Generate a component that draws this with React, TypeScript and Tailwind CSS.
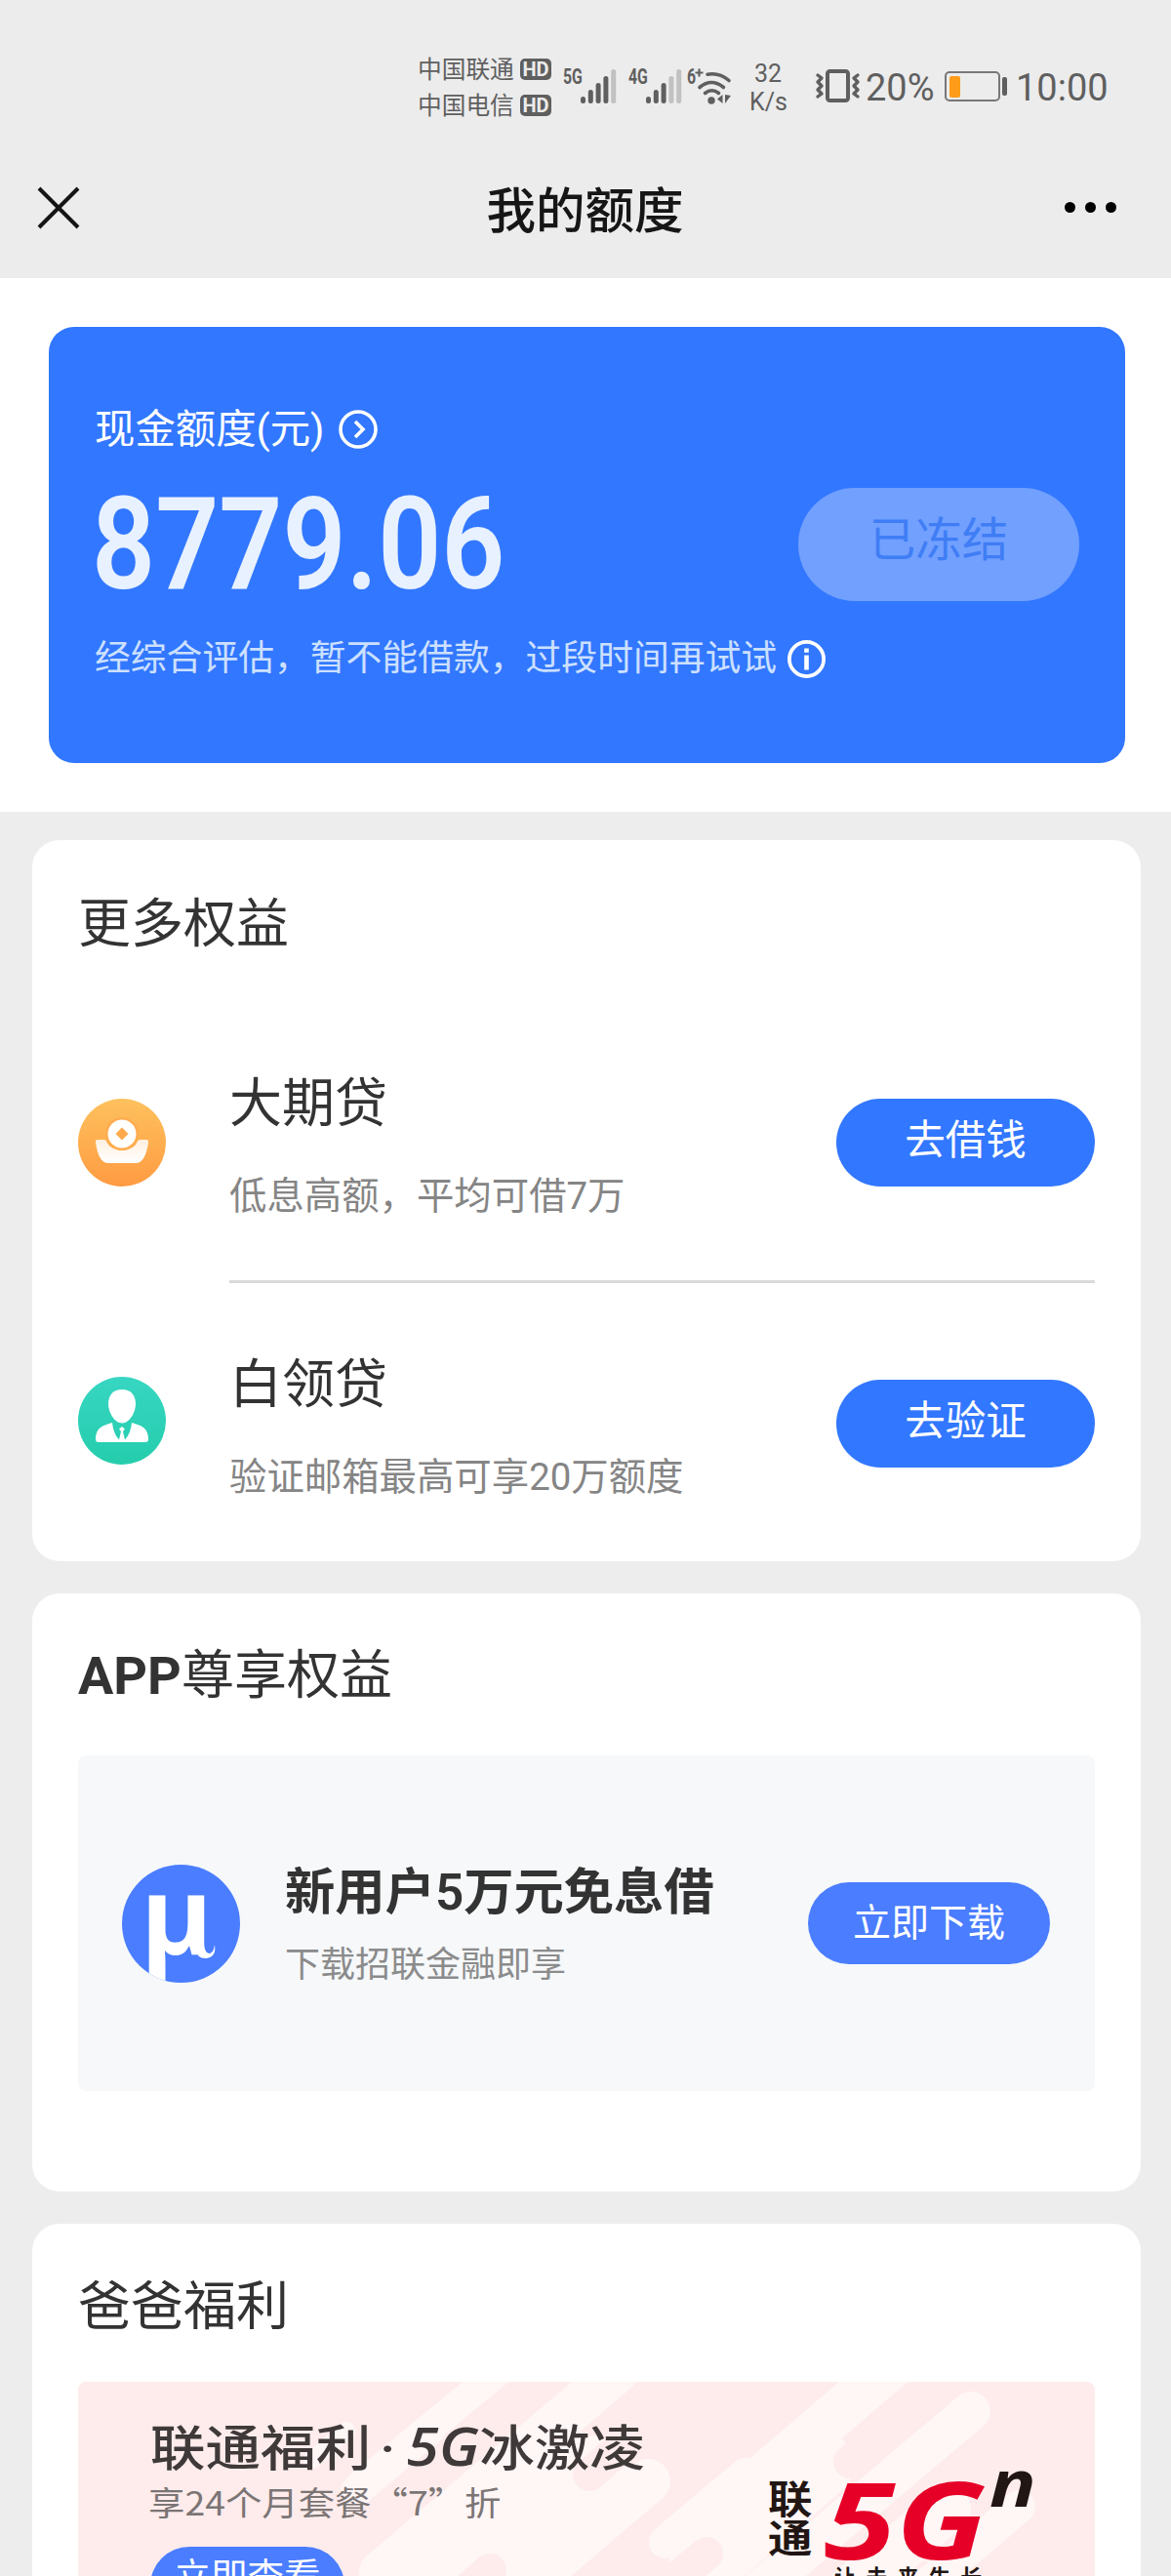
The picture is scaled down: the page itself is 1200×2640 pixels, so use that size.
import type { ReactNode } from 'react'
import { clsx } from 'clsx'

const sans = "font-[Roboto,'Noto_Sans_CJK_SC',sans-serif]"

function HdBadge() {
  return (
    <span className="flex h-[22px] w-8 items-center justify-center rounded-[5px] bg-[#5f5f5f] text-[20px] font-bold leading-none text-[#ececec]">
      HD
    </span>
  )
}

function Signal({ label, level }: { label: string; level: number }) {
  const bars = [7, 14, 21, 28, 35]
  return (
    <div className="flex h-9 items-start">
      <span className="w-[18px] origin-left scale-x-[0.72] text-[22px] font-bold leading-[17px]">{label}</span>
      <svg width="38" height="36" viewBox="0 0 38 36">
        {bars.map((h, i) => (
          <rect
            key={h}
            x={i * 7.8}
            y={36 - h}
            width="5"
            height={h}
            rx="2.5"
            fill={i < level ? '#5f5f5f' : '#c1c1c1'}
          />
        ))}
      </svg>
    </div>
  )
}

function StatusBar() {
  return (
    <div className="flex h-[150px] items-start pl-[428px] text-[#5f5f5f]">
      <div className="flex w-[149px] flex-col pt-[52.5px] text-[24.7px] leading-[37px]">
        <div className="flex items-center justify-between pr-3">
          <span>中国联通</span>
          <HdBadge />
        </div>
        <div className="flex items-center justify-between pr-3">
          <span>中国电信</span>
          <HdBadge />
        </div>
      </div>
      <div className="flex pt-[70px]">
        <div className="w-[67px]">
          <Signal label="5G" level={4} />
        </div>
        <div className="w-[60px]">
          <Signal label="4G" level={3} />
        </div>
      </div>
      {/* wifi 6 */}
      <div className="relative h-[110px] w-[64px]">
        <span className="absolute left-0 top-[70px] origin-left scale-x-[0.72] text-[22px] font-bold leading-[17px]">6</span>
        <svg className="absolute left-0 top-[68px]" width="46" height="40" viewBox="0 0 46 40">
          <g fill="none" stroke="#5f5f5f" strokeWidth="3.6" strokeLinecap="round">
            <path d="M8.5 6.500h8M12.500 2.500v8" strokeWidth="2.200" strokeLinecap="butt" />
            <path d="M21 8.200Q33 6 43 14.500" />
            <path d="M13 21.500Q25 11.500 37.500 21.500" />
            <path d="M18.500 27.500Q25.500 22 32.500 27.500" />
          </g>
          <circle cx="25" cy="35" r="3.700" fill="#5f5f5f" />
          <path d="M36.500 29v9l-5.500-4.500zM39 29v9l6-8z" fill="#5f5f5f" />
        </svg>
      </div>
      <div className="w-[38px] pt-[61px] text-center text-[25px] leading-[29px]">
        <div>32</div>
        <div>K/s</div>
      </div>
      <svg className="ml-[29px] mt-[70px]" width="48" height="36" viewBox="0 0 48 36" fill="none" stroke="#5f5f5f">
        <rect x="13" y="3" width="21" height="30" rx="2.500" strokeWidth="4" />
        <path d="M3 7l4 3-4 4 4 4-4 4 4 4-4 3" strokeWidth="3.400" strokeLinecap="round" strokeLinejoin="round" />
        <path d="M44 7l-4 3 4 4-4 4 4 4-4 4 4 3" strokeWidth="3.400" strokeLinecap="round" strokeLinejoin="round" />
      </svg>
      <span className="ml-[4px] mt-[70px] w-[81px] text-[38px] leading-[40px]">20%</span>
      <div className="mt-[73px] flex items-center">
        <div className="h-[31px] w-[57px] rounded-[5px] border-2 border-[#777] p-[2.500px]">
          <div className="h-[22px] w-[11px] rounded-[2px] bg-[#ff9c1a]" />
        </div>
        <div className="ml-[2px] h-[19px] w-[5px] rounded-[2px] bg-[#5f5f5f]" />
      </div>
      <span className="ml-[9px] mt-[70px] text-[38px] leading-[40px]">10:00</span>
    </div>
  )
}

function NavBar() {
  return (
    <div className="flex h-[135px] items-start justify-between pl-[38px] pr-[56px]">
      <svg className="mt-[41px]" width="44" height="44" viewBox="0 0 44 44" stroke="#151515" strokeWidth="4">
        <path d="M2 2l40 40M42 2L2 42" />
      </svg>
      <h1 className="mt-[40px] pl-[26px] text-[50.500px] font-medium leading-[54px] text-[#161616]">我的额度</h1>
      <div className="mt-[57px] flex gap-[10px]">
        <i className="size-[11px] rounded-full bg-black" />
        <i className="size-[11px] rounded-full bg-black" />
        <i className="size-[11px] rounded-full bg-black" />
      </div>
    </div>
  )
}

function QuotaCard() {
  return (
    <section className="bg-white px-[50px] pb-[50px] pt-[50px]">
      <div className="flex h-[447px] w-[1103px] flex-col rounded-[26px] bg-[#3277ff] px-[47px] pt-[80px]">
        <div className="flex items-center gap-[14px] text-[41.4px] leading-[50px] text-white">
          <span>现金额度(元)</span>
          <svg width="40" height="40" viewBox="0 0 40 40" fill="none" stroke="#fff" strokeWidth="3.600">
            <circle cx="20" cy="20" r="18" />
            <path d="M17 12l8 8-8 8" />
          </svg>
        </div>
        <div className="flex h-[166px] items-start justify-between">
          <span className="-ml-[3px] mt-[28px] w-[430px] origin-left scale-x-[0.871] whitespace-nowrap text-[131px] font-semibold leading-[130px] text-[#e8f1ff]">
            8779.06
          </span>
          <button className="mt-[35px] h-[116px] w-[288px] rounded-full bg-[#71a0ff] pb-[9px] text-[47.5px] leading-[60px] text-[#3f7df5]">
            已冻结
          </button>
        </div>
        <div className="mt-[19px] flex items-center gap-[11px] text-[36.800px] leading-[50px] text-[#cce0ff]">
          <span>经综合评估，暂不能借款，过段时间再试试</span>
          <svg width="39" height="39" viewBox="0 0 39 39" fill="#fff">
            <circle cx="19.5" cy="19.5" r="17.600" fill="none" stroke="#fff" strokeWidth="3.800" />
            <path d="M17.200 8.500h4.600v4.200h-4.600zM17.200 15.500h4.600v15h-4.600z" />
          </svg>
        </div>
      </div>
    </section>
  )
}

function IngotIcon() {
  return (
    <svg width="90" height="90" viewBox="0 0 90 90">
      <defs>
        <linearGradient id="ingot" x1="0" y1="0" x2="0" y2="1">
          <stop offset="0" stopColor="#fec15d" />
          <stop offset="1" stopColor="#ff9b42" />
        </linearGradient>
        <linearGradient id="bowl" x1="0" y1="0" x2="0" y2="1">
          <stop offset="0" stopColor="#fff0e0" />
          <stop offset="1" stopColor="#fff" />
        </linearGradient>
      </defs>
      <circle cx="45" cy="45" r="45" fill="url(#ingot)" />
      <path
        d="M20 42h7q2 0 2.500 2.500a16 11 0 0 0 31 0Q61 42 63 42h7q2.500 0 2 3Q69 66 59 66H31Q21 66 18 45q-.5-3 2-3z"
        fill="url(#bowl)"
      />
      <circle cx="45" cy="36" r="17" fill="#ffac4f" />
      <circle cx="45" cy="36" r="14.500" fill="#fff" />
      <path d="M45 29.500l6.500 6.500-6.500 6.500-6.500-6.500z" fill="#ffa94c" />
    </svg>
  )
}

function PersonIcon() {
  return (
    <svg width="90" height="90" viewBox="0 0 90 90">
      <defs>
        <linearGradient id="teal" x1="0" y1="0" x2="0" y2="1">
          <stop offset="0" stopColor="#37d6c2" />
          <stop offset="1" stopColor="#25cdac" />
        </linearGradient>
      </defs>
      <circle cx="45" cy="45" r="45" fill="url(#teal)" />
      <path d="M45 13c9 0 14 6 14 14.500S53 47.500 45 47.500 31 36 31 27.500 36 13 45 13z" fill="#fff" />
      <path
        d="M35 47q1 11 7 17.500L44 56l-2-2.500 3-2.500 3 2.500-2 2.500 2 8.500Q54 58 55 47c11 3 17 6 17 17q0 3-3 3H21q-3 0-3-3c0-11 6-14 17-17z"
        fill="#fff"
      />
    </svg>
  )
}

function Panel({ title, className, children }: { title: ReactNode; className?: string; children: ReactNode }) {
  return (
    <section className={clsx('mx-[33px] w-[1136px] rounded-[28px] bg-white px-[47px]', className)}>
      <h2 className="text-[54px] leading-[54px] text-[#333]">{title}</h2>
      {children}
    </section>
  )
}

type BenefitProps = { icon: ReactNode; iconClass: string; name: string; desc: string; action: string }

function Benefit({ icon, iconClass, name, desc, action }: BenefitProps) {
  return (
    <div className="flex items-start">
      <div className={iconClass}>{icon}</div>
      <div className="ml-[65px] flex-1">
        <h3 className="text-[54px] leading-[54px] text-[#333]">{name}</h3>
        <p className="mt-12 text-[38.400px] leading-[38px] text-[#858585]">{desc}</p>
      </div>
      <button className="mt-[21px] h-[90px] w-[265px] rounded-full bg-[#3277ff] pb-[5px] text-[41.500px] leading-[50px] text-white">
        {action}
      </button>
    </div>
  )
}

function AppPromo() {
  return (
    <div className="mt-[54px] flex h-[344px] items-start rounded-[8px] bg-[#f6f8fa] pl-[45px] pr-[46px] pt-[112px]">
      <svg width="121" height="121" viewBox="0 0 121 121">
        <defs>
          <clipPath id="disc">
            <circle cx="60.500" cy="60.500" r="60.500" />
          </clipPath>
        </defs>
        <circle cx="60.500" cy="60.500" r="60.500" fill="#4a7dff" />
        <g clipPath="url(#disc)">
          <text x="19" y="92" fontSize="112" fontWeight="700" fontFamily="Open Sans" fill="#fff">
            μ
          </text>
          {/* tail of the right stem */}
          <path d="M84 82q1 9 6 9 4-1 5-9 2 13-9 14-10 0-10-10z" fill="#fff" />
        </g>
      </svg>
      <div className="ml-[46px] flex-1">
        <h3 className="text-[51.300px] font-semibold leading-[58px] text-[#333]">新用户5万元免息借</h3>
        <p className="mt-[25px] text-[36px] leading-[40px] text-[#8b8b8b]">下载招联金融即享</p>
      </div>
      <button className="mt-[18px] h-[84px] w-[248px] rounded-full bg-[#4a7dff] text-[39px] leading-[50px] text-white">
        立即下载
      </button>
    </div>
  )
}

function BannerStripes() {
  return (
    <svg className="absolute inset-0" width="1044" height="199" viewBox="0 0 1044 199" strokeLinecap="round">
      <g stroke="#fff6f6">
        <path d="M430-10L290 105" strokeWidth="30" />
        <path d="M361 48L285 112" strokeWidth="32" />
        <path d="M275 50L240 80" strokeWidth="18" />
        <path d="M552-10L310 195" strokeWidth="44" />
        <path d="M584 102L400 258" strokeWidth="46" />
        <path d="M525 100L330 265" strokeWidth="90" />
        <path d="M602 164L684 95" strokeWidth="34" />
        <path d="M850-30L640 150" strokeWidth="46" />
        <path d="M915 30L640 262" strokeWidth="40" />
        <path d="M760 85L640 190" strokeWidth="70" />
        <path d="M964 128L850 225" strokeWidth="34" />
        <path d="M890 130L780 224" strokeWidth="50" />
      </g>
      <g stroke="#feecec">
        <path d="M610 22L524 95" strokeWidth="34" />
        <path d="M890-2L791 82" strokeWidth="34" />
        <path d="M644 176L560 246" strokeWidth="34" />
        <path d="M422 193L350 255" strokeWidth="34" />
      </g>
    </svg>
  )
}

function UnicomLogo() {
  return (
    <div className="absolute left-[707px] top-[84px] h-[140px] w-[300px] text-[#211613]">
      <div className="absolute left-0 top-[18px] origin-left scale-x-[1.150] text-[39.500px] font-bold leading-[40px]">
        <div>联</div>
        <div>通</div>
      </div>
      <span className="absolute left-[57px] top-[-10px] origin-left scale-x-[1.220] font-['Open_Sans'] text-[110px] font-bold italic leading-[130px] text-[#e60028]">
        5G
      </span>
      <span className="absolute left-[227px] top-[-17px] origin-left scale-x-[1.180] font-['Open_Sans'] text-[67px] font-bold italic leading-[70px]">
        n
      </span>
      <span className="absolute left-[68px] top-[102px] whitespace-nowrap text-[22px] font-bold leading-[30px] tracking-[10.300px]">
        让未来生长
      </span>
    </div>
  )
}

function UnicomBanner() {
  return (
    <div className="relative mt-[49px] h-[260px] overflow-hidden rounded-[8px] bg-[#feecec] pl-[74px] pt-[37px]">
      <BannerStripes />
      <div className="relative">
        <h3 className="h-14 origin-left scale-x-[1.120] whitespace-nowrap text-[50.500px] font-medium leading-[56px] text-[#3f3939]">
          联通福利<span className="ml-[8px] mr-[10px]">·</span>
          <span className="font-['Open_Sans'] text-[54px] font-semibold italic">5G</span>冰激凌
        </h3>
        <p className="-ml-[2px] mt-[10px] origin-left scale-x-110 whitespace-nowrap font-['Noto_Sans_CJK_SC',sans-serif] text-[34px] leading-[40px] text-[#7b7575]">
          享24个月套餐“7”折
        </p>
        <button className="mt-[26px] h-[80px] w-[199px] rounded-full bg-[#4a7dff] pb-[18px] text-[37.500px] leading-[40px] text-white">
          立即查看
        </button>
      </div>
      <UnicomLogo />
    </div>
  )
}

export default function App() {
  return (
    <div className={clsx('h-[2640px] w-[1200px] overflow-hidden bg-[#ededed]', sans)}>
      <header className="h-[285px] bg-[#ececec]">
        <StatusBar />
        <NavBar />
      </header>

      <QuotaCard />

      <main className="mt-[29px] flex flex-col gap-[33px]">
        <Panel title="更多权益" className="h-[739px] pt-[60px]">
          <div className="mt-[130px]">
            <Benefit
              icon={<IngotIcon />}
              iconClass="mt-[21px]"
              name="大期贷"
              desc="低息高额，平均可借7万"
              action="去借钱"
            />
            <div className="mb-[78px] ml-[155px] mt-[67px] h-[3px] bg-[#dadada]" />
            <Benefit
              icon={<PersonIcon />}
              iconClass="mt-[18px]"
              name="白领贷"
              desc="验证邮箱最高可享20万额度"
              action="去验证"
            />
          </div>
        </Panel>

        <Panel
          className="h-[613px] pt-[58px]"
          title={
            <>
              <b>APP</b>尊享权益
            </>
          }
        >
          <AppPromo />
        </Panel>

        <Panel title="爸爸福利" className="h-[400px] pt-[59px]">
          <UnicomBanner />
        </Panel>
      </main>
    </div>
  )
}
